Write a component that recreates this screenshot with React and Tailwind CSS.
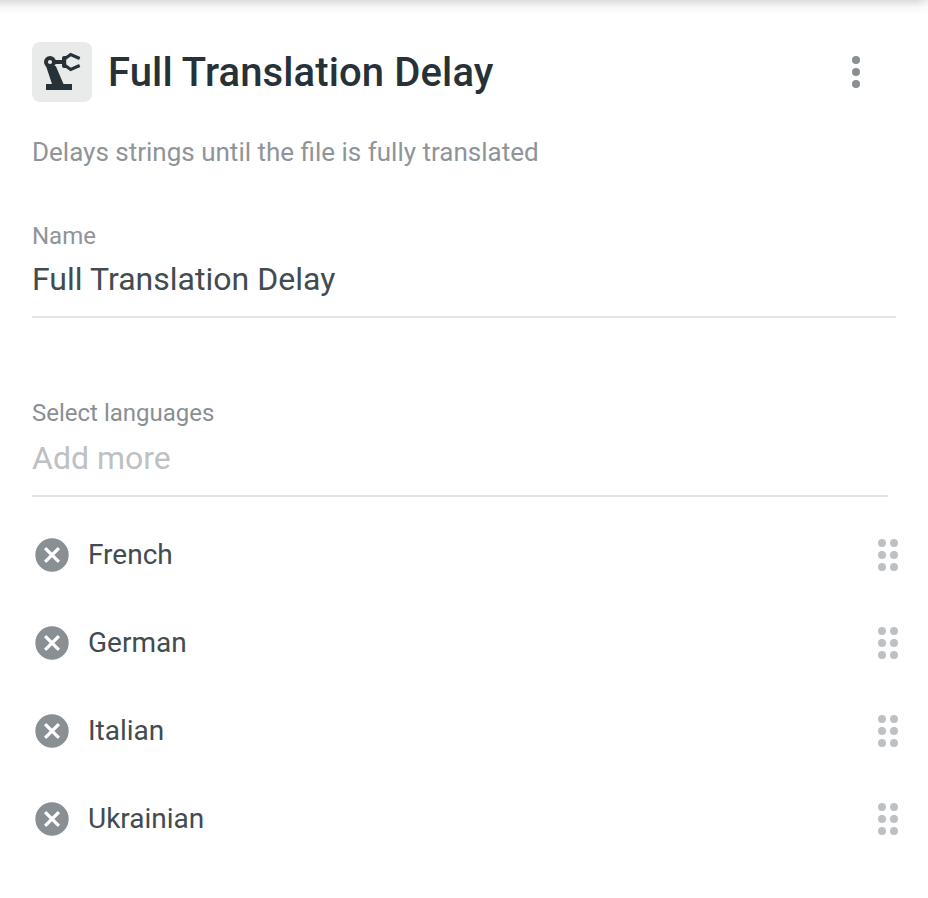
const languages = ['French', 'German', 'Italian', 'Ukrainian'];

function RobotArm() {
  return (
    <svg width="44" height="44" viewBox="40 50 44 44" fill="none">
      <path d="M46 90v-6h6L46 66h9.800L63.500 84H72v6z" fill="#263238" />
      <circle cx="50" cy="62" r="6" fill="#263238" />
      <path d="M55 60h7V58q0-2 2-2h2.200v12H64q-2 0-2-2V64h-7z" fill="#263238" />
      <path d="M64.800 58.800l5.900-4.200 9 3.900M64.800 65.200l5.900 4.200 9-3.900" stroke="#263238" strokeWidth="3.100" />
      <circle cx="50" cy="62" r="2.100" fill="#e9ebeb" />
    </svg>
  );
}

function DragHandle() {
  return (
    <svg className="shrink-0" width="20" height="32" viewBox="0 0 20 32" fill="#bdc1c3">
      {[4, 16, 28].map((y) => (
        <g key={y}>
          <circle cx="4" cy={y} r="4" />
          <circle cx="16" cy={y} r="4" />
        </g>
      ))}
    </svg>
  );
}

function LanguageRow({ name }) {
  return (
    <li className="flex h-[88px] items-center pl-[3px]">
      <svg className="shrink-0" width="34" height="34" viewBox="0 0 34 34">
        <circle cx="17" cy="17" r="16.700" fill="#8a8f93" />
        <path d="M10.100 10.100l13.800 13.800M23.900 10.100L10.100 23.900" stroke="#fff" strokeWidth="3.300" />
      </svg>
      <span className="ml-[19px] flex-1 text-[28px] leading-8 text-[#414b50]">{name}</span>
      <DragHandle />
    </li>
  );
}

export default function App() {
  return (
    <main className="h-[898px] w-[928px] overflow-hidden bg-white font-[Roboto,sans-serif]">
      <div className="flex h-[14px] justify-end bg-gradient-to-b from-[#dcdcdc] via-[#f7f7f7] to-white">
        <div className="w-3 bg-gradient-to-r from-white/0 to-white/50" />
      </div>
      <header className="mt-7 flex h-[60px] items-center pl-8 pr-[68px]">
        <div className="flex size-[60px] items-center justify-center rounded-lg bg-[#e9ebeb]">
          <RobotArm />
        </div>
        <h1 className="ml-4 flex-1 pt-[2px] text-[40px] font-medium leading-[48px] tracking-[0.12px] text-[#263238]">Full Translation Delay</h1>
        <svg width="8" height="32" viewBox="0 0 8 32" fill="#8a8f93">
          <circle cx="4" cy="4" r="4" />
          <circle cx="4" cy="16" r="4" />
          <circle cx="4" cy="28" r="4" />
        </svg>
      </header>
      <p className="ml-8 mt-[34px] text-[26px] leading-8 text-[#8f9498]">Delays strings until the file is fully translated</p>
      <section className="ml-8 mr-8 mt-[54px] h-[96px] border-b-2 border-[#e3e4e5]">
        <div className="text-[24px] leading-7 text-[#8f9498]">Name</div>
        <div className="mt-[9px] text-[32px] leading-10 tracking-[0.02px] text-[#414b50]">Full Translation Delay</div>
      </section>
      <section className="ml-8 mr-10 mt-[81px] h-[98px] border-b-2 border-[#e3e4e5]">
        <div className="text-[24px] leading-7 text-[#8a8f93]">Select languages</div>
        <div className="mt-[11px] text-[32px] leading-10 text-[#bdc1c3]">Add more</div>
      </section>
      <ul className="ml-8 mr-[30px] mt-[14px]">
        {languages.map((name) => <LanguageRow key={name} name={name} />)}
      </ul>
    </main>
  );
}
